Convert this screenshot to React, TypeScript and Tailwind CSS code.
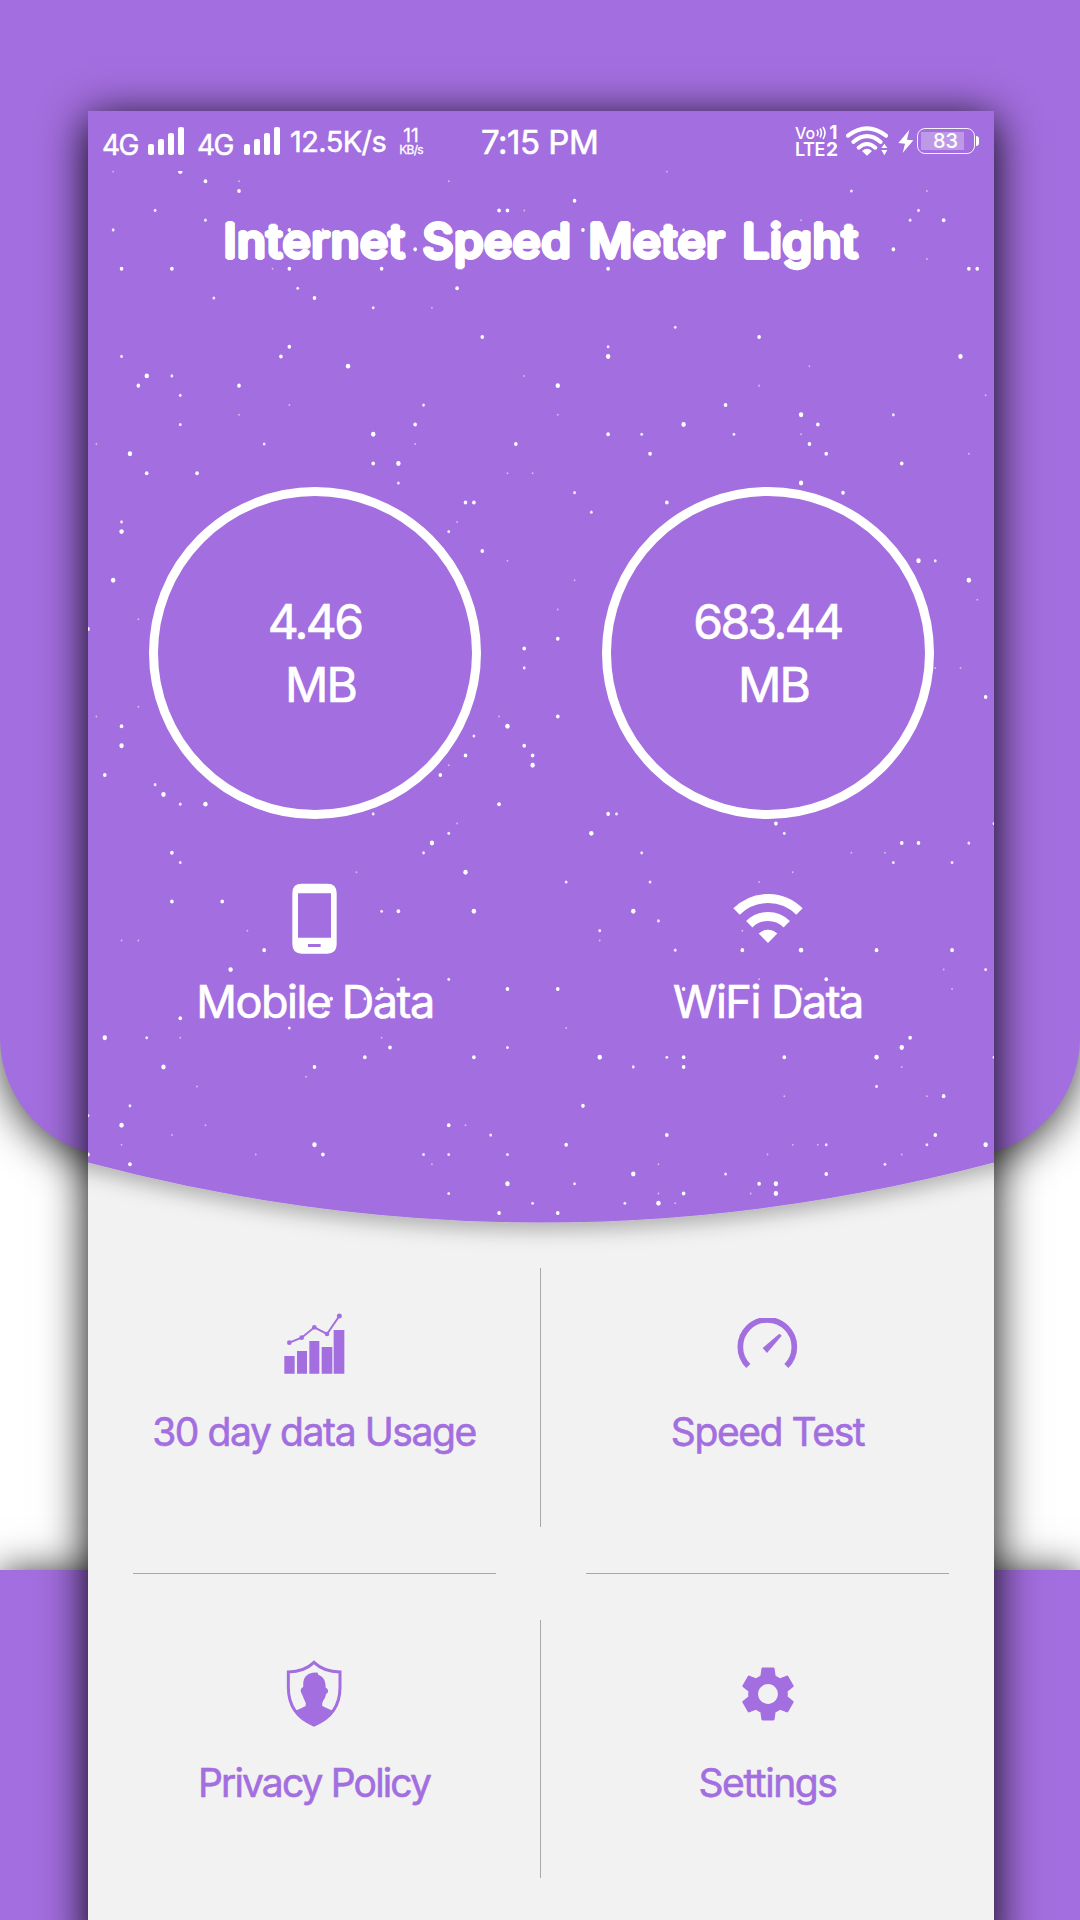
import type { ReactNode } from 'react';
import { MdSettings } from 'react-icons/md';

const CELL_W = 8.389;
const CELL_H = 9.733;

// [row, "column:size column:size ..."] on a 108 x 108 grid, size 1 is a faint speck
const STARS: [number, string][] = [
  [0, '3:1 11:4 69:1'],
  [1, '14:3 18:1 43:1'],
  [2, '18:3 91:2 100:1'],
  [3, '58:3'],
  [4, '8:2 49:3 50:3 52:1 99:2'],
  [5, '14:2 85:1 98:2 102:3'],
  [6, '3:2 24:3 28:2 34:1 59:3 65:2 71:2'],
  [8, '39:3 41:3 96:3'],
  [9, '100:1'],
  [10, '4:3 10:3 22:1 24:3 35:3 62:3 105:3 106:3'],
  [12, '25:2 44:3'],
  [13, '15:2 27:3'],
  [14, '34:2 41:1'],
  [16, '70:2'],
  [17, '47:3 80:3'],
  [18, '24:3 62:2'],
  [19, '4:2 23:3 62:4 104:4'],
  [20, '31:4 86:1'],
  [21, '7:4 10:2 52:1'],
  [22, '6:3 18:3 56:4 80:1'],
  [23, '11:2 107:1'],
  [24, '24:1 40:2 76:3'],
  [25, '18:1 56:1 85:4 96:2'],
  [26, '11:2 39:3 71:4 87:3'],
  [27, '34:4 62:3 66:2 77:2 85:1'],
  [28, '1:1 21:2 39:1 51:3 86:3'],
  [29, '5:4 67:3 88:3 105:1'],
  [30, '34:3 37:4 97:3'],
  [31, '7:3 13:3 50:1 53:1'],
  [32, '37:2 85:4'],
  [33, '58:2 90:3'],
  [34, '45:3 46:3 69:3'],
  [35, '60:2'],
  [36, '4:2 44:1'],
  [37, '4:4 43:2'],
  [39, '47:3'],
  [40, '50:1 99:4 101:2'],
  [42, '3:4 58:1 105:4'],
  [44, '106:1'],
  [45, '56:1'],
  [46, '6:1'],
  [47, '0:3'],
  [48, '56:3'],
  [49, '52:3'],
  [51, '52:2 101:1 104:1'],
  [54, '107:3'],
  [55, '6:1'],
  [56, '1:1 49:1 56:3'],
  [57, '4:3 50:4'],
  [58, '46:2'],
  [59, '4:4 52:3'],
  [60, '45:3 53:3'],
  [61, '43:1 53:4'],
  [62, '2:3 42:3'],
  [63, '8:2'],
  [64, '9:4'],
  [65, '11:2 14:4 49:3'],
  [66, '34:2 62:3 63:2'],
  [67, '44:1 82:3 108:2'],
  [68, '43:2 60:4 83:2'],
  [69, '41:4 97:3 99:3 105:2'],
  [70, '10:3 40:2 66:2 91:1 95:1'],
  [71, '11:2 96:2 103:2'],
  [72, '32:1 45:4 84:1'],
  [73, '57:2 67:2 80:1'],
  [75, '10:3 16:3'],
  [76, '35:2 37:3 46:4 65:4'],
  [77, '68:2'],
  [78, '19:1 61:2 78:1'],
  [79, '4:1 6:1 61:1'],
  [80, '21:3 70:2 78:3 85:4 94:3 103:3'],
  [82, '17:4 102:1 107:2'],
  [83, '37:2 43:2 80:1 88:3'],
  [84, '35:3 50:3 56:3 71:3 85:2 90:4 103:1'],
  [85, '29:3 33:2'],
  [86, '28:1'],
  [87, '11:3 31:2'],
  [88, '24:2 57:1'],
  [89, '2:4 7:2 11:1 35:1 98:3'],
  [90, '36:3 50:2 97:4'],
  [91, '33:3 46:3 61:4 69:2 71:3 83:3 94:4 108:2'],
  [92, '9:4 27:3 65:2 71:3 97:1'],
  [93, '26:1'],
  [94, '13:1 94:2'],
  [95, '83:1 100:1 102:3'],
  [96, '5:2 59:3'],
  [97, '0:2'],
  [98, '4:4 14:1 43:3 45:1'],
  [99, '10:1 48:2 69:3 101:3'],
  [100, '4:1 27:4 57:3 84:1 87:1 88:2 100:2 107:4'],
  [101, '0:3 20:1 28:3 40:2 43:2 50:2 81:1 97:1'],
  [102, '5:3 41:1 68:1 95:2'],
  [103, '65:4 76:2 88:3'],
  [104, '50:4 58:2 80:3 82:4'],
  [105, '43:2 68:1 71:3 79:1 82:4'],
  [106, '53:2 64:2 68:4 70:1'],
  [107, '49:3 56:3'],
];

const STAR_RADIUS = [0, 0.9, 1.4, 1.8, 2.2];
const STAR_OPACITY = [0, 0.55, 0.85, 1, 1];

function HeroBackground() {
  return (
    <svg className="absolute left-0 top-0" width="906" height="1180" viewBox="0 0 906 1180">
      <defs>
        <filter id="heroShadow" x="-5%" y="-5%" width="110%" height="110%">
          <feDropShadow dx="0" dy="8" stdDeviation="10" floodColor="#000" floodOpacity="0.27" />
        </filter>
        <clipPath id="sky">
          <rect x="0" y="60" width="906" height="1060" />
        </clipPath>
      </defs>
      <path
        d="M-40 0H946V1040L906 1051.5Q453 1171.5 0 1051.5L-40 1040Z"
        fill="#a36edf"
        filter="url(#heroShadow)"
      />
      <g fill="#fff" clipPath="url(#sky)">
        {STARS.flatMap(([row, cells]) =>
          cells.split(' ').map((cell) => {
            const [col, size] = cell.split(':').map(Number);
            return (
              <ellipse
                key={`${row}-${col}`}
                cx={col * CELL_W}
                cy={60.5 + row * CELL_H}
                rx={STAR_RADIUS[size]}
                ry={STAR_RADIUS[size] * 1.12}
                opacity={STAR_OPACITY[size]}
              />
            );
          })
        )}
      </g>
    </svg>
  );
}

function SignalBars() {
  return (
    <div className="flex h-[28px] items-end gap-[4.5px]">
      <div className="h-[11px] w-[5.5px] rounded-[2px] bg-white" />
      <div className="h-[16px] w-[5.5px] rounded-[2px] bg-white" />
      <div className="h-[22px] w-[5.5px] rounded-[2px] bg-white" />
      <div className="h-[28px] w-[5.5px] rounded-[2px] bg-white" />
    </div>
  );
}

function StatusWifi() {
  return (
    <svg width="42" height="30" viewBox="920 77 126 90" fill="none" stroke="#fff" strokeWidth="12">
      <path d="M926 106Q983 62 1040 106" strokeLinecap="round" />
      <path d="M942 125Q983 90 1024 125" strokeLinecap="round" />
      <path d="M958 142Q983 120 1008 142" strokeLinecap="round" />
      <path d="M968 152Q983 138 998 152L983 166Z" fill="#fff" stroke="none" />
      <path d="M1035 130L1044 143H1026ZM1026 149H1044L1035 165Z" fill="#fff" stroke="none" />
    </svg>
  );
}

function StatusBar() {
  return (
    <div className="flex h-[60px] pl-[14px] text-white">
      <span className="w-[46px] pt-[19px] text-[28px] leading-[30px] tracking-[-1.5px] [-webkit-text-stroke:0.5px_white]">
        4G
      </span>
      <div className="w-[49px] pt-[16px]">
        <SignalBars />
      </div>
      <span className="w-[47px] pt-[19px] text-[28px] leading-[30px] tracking-[-1.5px] [-webkit-text-stroke:0.5px_white]">
        4G
      </span>
      <div className="w-[46px] pt-[16px]">
        <SignalBars />
      </div>
      <span className="w-[109px] whitespace-nowrap pt-[16px] text-[29px] leading-[30px] tracking-[-0.6px] [-webkit-text-stroke:0.5px_white]">
        12.5K/s
      </span>
      <div className="flex w-[24px] flex-col items-center pt-[16px] [-webkit-text-stroke:0.3px_white]">
        <span className="text-[19px] leading-[17px]">11</span>
        <span className="text-[12px] leading-[11px] tracking-[-0.8px]">KB/s</span>
      </div>
      <span className="ml-[58px] w-[313px] whitespace-nowrap pt-[15px] text-[33px] leading-[32px] tracking-[-0.5px] [-webkit-text-stroke:0.6px_white]">
        7:15 PM
      </span>
      <div className="flex w-[52px] flex-col pl-px pt-[14px]">
        <div className="flex h-[16px] items-center text-[16px] font-medium leading-[16px]">
          Vo
          <svg className="ml-[1px]" width="10" height="14" viewBox="0 0 10 14" fill="none" stroke="#fff" strokeWidth="1.6">
            <path d="M1 4Q3 7 1 10M4 2.500Q7 7 4 11.500M7 1Q11 7 7 13" />
          </svg>
          <span className="ml-[3px] text-[19px] font-bold">1</span>
        </div>
        <div className="flex h-[17px] items-center text-[18px] font-semibold leading-[17px] tracking-[-0.4px]">
          LTE<span className="ml-[1px] text-[19px] font-bold">2</span>
        </div>
      </div>
      <div className="w-[52px] pt-[15px]">
        <StatusWifi />
      </div>
      <svg className="mt-[18px]" width="16" height="25" viewBox="1074 86 48 75" fill="#fff">
        <path d="M1108 88L1075 128L1095 130L1088 158L1120 120L1101 118Z" />
      </svg>
      <div className="ml-[3px] mt-[17px] flex h-[26px] w-[58px] items-center rounded-[8px] border-[1.5px] border-white/90 pl-[3px]">
        <div className="flex h-[18px] w-[43px] items-center justify-center bg-white/30 pl-[6px] text-[20px] font-medium leading-[18px]">
          83
        </div>
      </div>
      <div className="ml-[1px] mt-[25px] h-[10px] w-[3px] rounded-r-full bg-white" />
    </div>
  );
}

function PhoneIcon() {
  return (
    <svg width="45" height="71" viewBox="636 547 135 213" fill="#fff">
      <path
        fillRule="evenodd"
        d="M665 549H742Q770 549 770 577V731Q770 759 742 759H665Q637 759 637 731V577Q637 549 665 549ZM654 578V711H753V578ZM684 730V739H722V730Z"
      />
    </svg>
  );
}

function WifiIcon() {
  return (
    <svg width="70" height="50" viewBox="0 0 70 50" fill="none" stroke="#fff" strokeWidth="9">
      <path d="M3.530 17.530A44.500 44.500 0 0 1 66.470 17.530" />
      <path d="M16.260 30.260A26.500 26.500 0 0 1 53.740 30.260" />
      <path d="M25.700 39.600A13.300 13.300 0 0 1 44.300 39.600L35 49Z" fill="#fff" stroke="none" />
    </svg>
  );
}

function ChartIcon() {
  return (
    <svg width="61" height="61" viewBox="131 67 183 183" fill="#a36edf">
      <path d="M132 196h31v53h-31zM170 181h30v68h-30zM207 151h30v98h-30zM244 169h32v80h-32zM280 118h32v131h-32z" />
      <path d="M147 156L184 141L222 110L260 130L297 76" fill="none" stroke="#a36edf" strokeWidth="6" />
      <circle cx="147" cy="156" r="7" />
      <circle cx="184" cy="141" r="7" />
      <circle cx="222" cy="110" r="7" />
      <circle cx="260" cy="130" r="7" />
      <circle cx="297" cy="76" r="7.500" />
    </svg>
  );
}

function SpeedIcon() {
  return (
    <svg width="61" height="51" viewBox="110 79 183 153" fill="none">
      <path d="M144 223A81 81 0 1 1 258 223" stroke="#a36edf" strokeWidth="17" />
      <path d="M187 169L237 126L244 132L200 184Z" fill="#a36edf" />
    </svg>
  );
}

function ShieldIcon() {
  return (
    <svg width="56" height="68" viewBox="498 118 168 204">
      <path
        d="M582 125Q553 153 505 154V200Q505 282 582 313Q660 282 660 200V154Q611 153 582 125Z"
        fill="none"
        stroke="#a36edf"
        strokeWidth="9"
      />
      <path
        d="M525 271Q546 262 557 256Q559 246 552 236Q549 226 545 219Q539 209 545 202Q550 201 550 196Q548 180 556 168Q569 154 593 156L595 162Q611 168 615 184Q617 192 617 201Q626 205 624 215L618 221Q616 233 609 241Q605 250 607 256Q620 263 640 271Q619 302 582 317Q546 302 525 271Z"
        fill="#a36edf"
      />
    </svg>
  );
}

interface GaugeProps {
  value: string;
  icon: ReactNode;
  label: string;
}

function Gauge({ value, icon, label }: GaugeProps) {
  return (
    <div className="flex flex-1 flex-col items-center [-webkit-text-stroke:0.7px_white]">
      <div className="flex h-[332px] w-[332px] flex-col items-center justify-center rounded-full border-[9px] border-white text-[48px] leading-[63px]">
        <span className="tracking-[-2.6px]">{value}</span>
        <span className="pl-[12px] tracking-[-1.8px]">MB</span>
      </div>
      <div className="mt-[52px] flex h-[95px] items-center">{icon}</div>
      <span className="mt-[12px] whitespace-nowrap pl-px text-[45px] leading-[48px] tracking-[-1.5px]">{label}</span>
    </div>
  );
}

interface MenuItemProps {
  icon: ReactNode;
  label: string;
  tight?: boolean;
}

function MenuItem({ icon, label, tight }: MenuItemProps) {
  return (
    <div className="flex flex-1 flex-col items-center">
      <div className="flex h-[72px] items-center">{icon}</div>
      <span
        className={`mt-[29px] whitespace-nowrap text-[39px] leading-[48px] [-webkit-text-stroke:0.6px_#a36edf] ${tight ? 'tracking-[-1.85px]' : 'tracking-[-1.4px]'}`}
      >
        {label}
      </span>
    </div>
  );
}

export default function App() {
  return (
    <div className="relative h-[1920px] w-[1080px] overflow-hidden bg-white font-['Inter','Liberation_Sans',sans-serif]">
      {/* Backdrop */}
      <div className="absolute inset-0 flex flex-col justify-between">
        <div className="h-[1157px] rounded-b-[120px] bg-[#a36edf] shadow-[0_8px_42px_rgba(0,0,0,0.75)]" />
        <div className="h-[350px] bg-[#a36edf] shadow-[0_0_36px_rgba(0,0,0,0.75)]" />
      </div>

      {/* Phone screen */}
      <div className="relative ml-[88px] mt-[111px] h-[1840px] w-[906px] bg-[#f2f2f2] shadow-[0_8px_42px_rgba(0,0,0,1)]">
        <div className="absolute inset-0 overflow-hidden">
          <HeroBackground />
        </div>

        <div className="relative flex h-[1112px] flex-col text-white">
          <StatusBar />
          <h1 className="mt-[36px] whitespace-nowrap text-center text-[48px] font-medium leading-[68px] tracking-[0.4px] [word-spacing:4px] [text-shadow:2px_0_#fff,-2px_0_#fff,0_2px_#fff,0_-2px_#fff,1.4px_1.4px_#fff,-1.4px_1.4px_#fff,1.4px_-1.4px_#fff,-1.4px_-1.4px_#fff]">
            Internet Speed Meter Light
          </h1>
          <div className="mt-[212px] flex">
            <Gauge value="4.46" icon={<PhoneIcon />} label="Mobile Data" />
            <Gauge value="683.44" icon={<WifiIcon />} label="WiFi Data" />
          </div>
        </div>

        {/* Menu */}
        <div className="relative flex flex-col text-[#a36edf]">
          <div className="mt-[45px] flex h-[259px]">
            <div className="flex w-[452px] pt-[39px]">
              <MenuItem icon={<ChartIcon />} label="30 day data Usage" />
            </div>
            <div className="w-px bg-[#a8a8a8]" />
            <div className="flex flex-1 pt-[39px]">
              <MenuItem icon={<SpeedIcon />} label="Speed Test" />
            </div>
          </div>
          <div className="flex justify-between px-[45px] pt-[46px]">
            <div className="h-px w-[363px] bg-[#a8a8a8]" />
            <div className="h-px w-[363px] bg-[#a8a8a8]" />
          </div>
          <div className="mt-[46px] flex h-[258px]">
            <div className="flex w-[452px] pt-[38px]">
              <MenuItem icon={<ShieldIcon />} label="Privacy Policy" tight />
            </div>
            <div className="w-px bg-[#a8a8a8]" />
            <div className="flex flex-1 pt-[38px]">
              <MenuItem icon={<MdSettings size={66} />} label="Settings" />
            </div>
          </div>
        </div>
      </div>
    </div>
  );
}
